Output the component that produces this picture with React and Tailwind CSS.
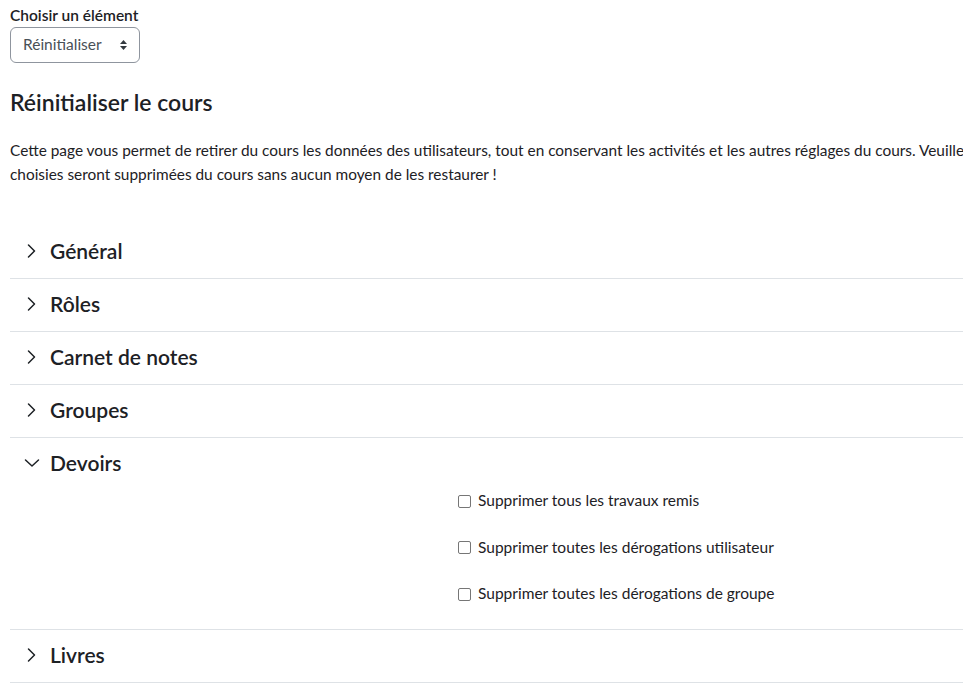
import React, { useState } from "react";

const sections = ["Général", "Rôles", "Carnet de notes", "Groupes", "Devoirs", "Livres"];

const devoirsOptions = [
  "Supprimer tous les travaux remis",
  "Supprimer toutes les dérogations utilisateur",
  "Supprimer toutes les dérogations de groupe",
];

const Chevron = ({ open }) => (
  <svg width="16" height="16" viewBox="0 0 16 16" fill="none" stroke="#1d2125" strokeWidth="1.5" strokeLinecap="round" strokeLinejoin="round">
    {open ? <path d="M1.5 5 8 11l6.5-6" /> : <path d="M4.5 2l6 6-6 6" />}
  </svg>
);

export default function App() {
  const [open, setOpen] = useState("Devoirs");

  return (
    <div className="w-full h-[690px] overflow-hidden bg-white text-[#1d2125]" style={{ fontFamily: "Lato, 'Noto Sans', sans-serif" }}>
      <div className="w-[1100px] pl-[10px] pt-[5px]">
        <label className="block text-[15.5px] font-semibold leading-[20px]">Choisir un élément</label>
        <div className="mt-[2px] w-[130px] h-[36px] border border-[#8f959e] rounded-[6px] flex items-center justify-between pl-[12px] pr-[11px] text-[15.5px] text-[#495057]">
          <span>Réinitialiser</span>
          <svg width="9" height="12" viewBox="0 0 9 12" fill="#343a40">
            <path d="M4.5 1 8 5H1z" />
            <path d="M4.5 11 1 7h7z" />
          </svg>
        </div>

        <h2 className="mt-[24px] text-[23px] font-semibold leading-[30px]">Réinitialiser le cours</h2>

        <p className="mt-[21px] text-[15.4px] leading-[24px] whitespace-nowrap">
          Cette page vous permet de retirer du cours les données des utilisateurs, tout en conservant les activités et les autres réglages du cours. Veuillez noter que les données
          <br />
          choisies seront supprimées du cours sans aucun moyen de les restaurer !
        </p>

        <div className="mt-[40px]">
          {sections.map((s) => (
            <div key={s} className="border-b border-[#dee2e6]">
              <button
                onClick={() => setOpen(open === s ? "" : s)}
                className="flex items-center h-[52px] w-full pl-[14px] pb-[2px] gap-[10px] text-left"
              >
                <Chevron open={open === s} />
                <span className="text-[21px] font-semibold">{s}</span>
              </button>
              {open === s && s === "Devoirs" && (
                <div className="pl-[448px] pb-[24px] flex flex-col gap-[24.5px]">
                  {devoirsOptions.map((o) => (
                    <label key={o} className="flex items-center gap-[7px] h-[22px] text-[15.5px]">
                      <span className="w-[13px] h-[13px] border border-[#767676] rounded-[2px] bg-white" />
                      {o}
                    </label>
                  ))}
                </div>
              )}
            </div>
          ))}
        </div>
      </div>
    </div>
  );
}
